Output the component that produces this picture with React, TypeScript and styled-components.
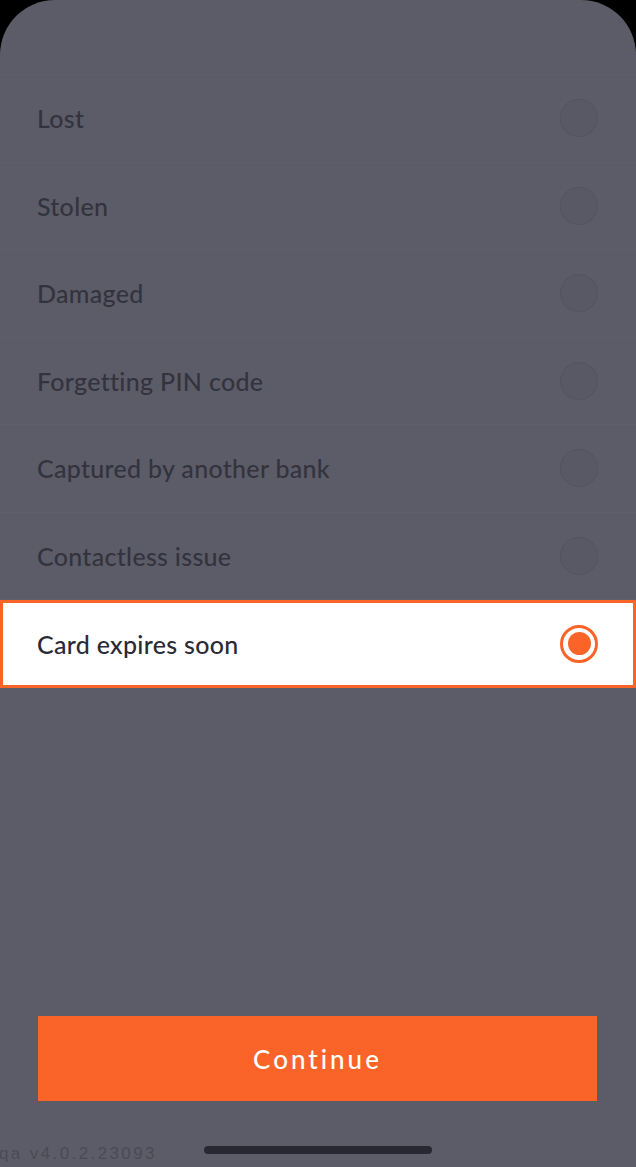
import styled, { createGlobalStyle } from "styled-components";

const GlobalStyle = createGlobalStyle`
  html, body {
    margin: 0;
    padding: 0;
    background: #000;
  }
  * {
    box-sizing: border-box;
  }
`;

const Screen = styled.div`
  position: relative;
  width: 636px;
  height: 1167px;
  background: #5c5c68;
  border-radius: 55px 55px 0 0;
  overflow: hidden;
  display: flex;
  flex-direction: column;
  font-family: "Lato", "Inter", sans-serif;
`;

const Header = styled.div`
  height: 75px;
  flex-shrink: 0;
  border-bottom: 1px solid rgba(255, 255, 255, 0.02);
`;

const List = styled.div`
  display: flex;
  flex-direction: column;
`;

const Row = styled.label<{ $selected?: boolean }>`
  height: 87.5px;
  display: flex;
  align-items: center;
  justify-content: space-between;
  background: ${(p) => (p.$selected ? "#ffffff" : "transparent")};
  border: ${(p) => (p.$selected ? "3px solid #fa6428" : "none")};
  border-bottom: ${(p) =>
    p.$selected ? "3px solid #fa6428" : "1px solid rgba(255, 255, 255, 0.02)"};
  padding-left: ${(p) => (p.$selected ? "34px" : "37px")};
  padding-right: ${(p) => (p.$selected ? "35px" : "38px")};
`;

const RowText = styled.span<{ $selected?: boolean }>`
  font-size: 25px;
  font-weight: 500;
  letter-spacing: 0.3px;
  color: ${(p) => (p.$selected ? "#2a2a35" : "#33333e")};
`;

const Radio = styled.span<{ $selected?: boolean }>`
  width: 38px;
  height: 38px;
  border-radius: 50%;
  display: flex;
  align-items: center;
  justify-content: center;
  background: ${(p) => (p.$selected ? "#fff" : "#595965")};
  border: ${(p) =>
    p.$selected ? "3px solid #fa6428" : "1px solid rgba(0, 0, 0, 0.06)"};

  &::after {
    content: "";
    display: ${(p) => (p.$selected ? "block" : "none")};
    width: 23px;
    height: 23px;
    border-radius: 50%;
    background: #fa6428;
  }
`;

const Spacer = styled.div`
  flex: 1;
`;

const Footer = styled.div`
  display: flex;
  flex-direction: column;
  align-items: center;
  padding: 0 39px 0 38px;
`;

const ContinueButton = styled.button`
  width: 100%;
  height: 85px;
  border: none;
  background: #fa6428;
  color: #fff;
  font-family: "Lato", "Inter", sans-serif;
  font-size: 26px;
  font-weight: 500;
  letter-spacing: 3px;
  cursor: pointer;
`;

const BottomBar = styled.div`
  position: relative;
  height: 66px;
  display: flex;
  justify-content: center;
  padding-top: 45px;
`;

const HomeIndicator = styled.div`
  width: 228px;
  height: 8px;
  border-radius: 4px;
  background: #282833;
`;

const Version = styled.span`
  position: absolute;
  left: -1px;
  bottom: 3px;
  font-family: "Liberation Sans", Arial, sans-serif;
  font-size: 17px;
  letter-spacing: 2.4px;
  color: #4a4a56;
`;

const reasons = [
  "Lost",
  "Stolen",
  "Damaged",
  "Forgetting PIN code",
  "Captured by another bank",
  "Contactless issue",
  "Card expires soon",
];

export default function App() {
  const selected = "Card expires soon";
  return (
    <>
      <GlobalStyle />
      <Screen>
        <Header />
        <List>
          {reasons.map((r) => (
            <Row key={r} $selected={r === selected}>
              <RowText $selected={r === selected}>{r}</RowText>
              <Radio $selected={r === selected} />
            </Row>
          ))}
        </List>
        <Spacer />
        <Footer>
          <ContinueButton>Continue</ContinueButton>
        </Footer>
        <BottomBar>
          <HomeIndicator />
          <Version>qa v4.0.2.23093</Version>
        </BottomBar>
      </Screen>
    </>
  );
}
